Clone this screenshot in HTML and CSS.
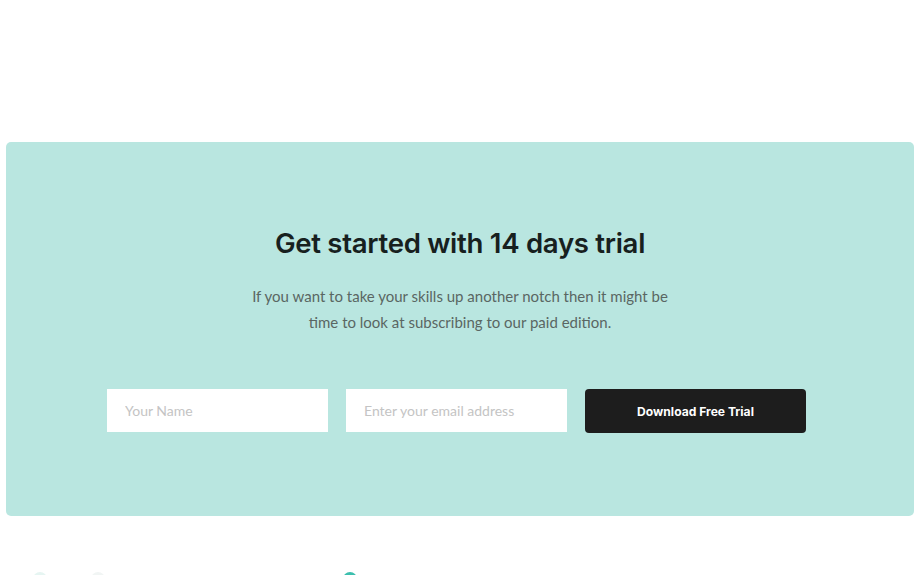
FILE: index.html
```html
<!DOCTYPE html>
<html lang="en">
<head>
<meta charset="utf-8">
<title>Get started</title>
<link rel="stylesheet" href="styles.css">
</head>
<body>
<div class="page">
  <section class="cta">
    <h2 class="cta-title">Get started with 14 days trial</h2>
    <p class="cta-text">If you want to take your skills up another notch then it might be time to look at subscribing to our paid edition.</p>
    <form class="cta-form">
      <input class="field" type="text" placeholder="Your Name">
      <input class="field" type="email" placeholder="Enter your email address">
      <button class="btn" type="button">Download Free Trial</button>
    </form>
  </section>
  <div class="next">
    <span class="dot dot-faint dot-a"></span>
    <span class="dot dot-faint dot-b"></span>
    <span class="dot dot-teal"></span>
  </div>
</div>
</body>
</html>
```
FILE: styles.css
```css
* { box-sizing: border-box; }
html, body { margin: 0; padding: 0; background: #ffffff; }
body {
  width: 920px;
  height: 575px;
  overflow: hidden;
  font-family: "Lato", "Liberation Sans", sans-serif;
}
.page {
  padding: 142px 6px 0 6px;
}
.cta {
  background: #b9e6e0;
  border-radius: 5px;
  height: 374px;
  padding-top: 82px;
  display: flex;
  flex-direction: column;
  align-items: center;
}
.cta-title {
  margin: 0;
  font-family: "Inter", "Liberation Sans", sans-serif;
  font-weight: 600;
  font-size: 27.6px;
  line-height: 38px;
  color: #17201e;
  letter-spacing: -0.3px;
}
.cta-text {
  margin: 21px 0 0 0;
  width: 420px;
  text-align: center;
  font-family: "Lato", "Liberation Sans", sans-serif;
  font-size: 15px;
  line-height: 26px;
  color: #5a6663;
}
.cta-form {
  margin-top: 54px;
  display: flex;
  gap: 18px;
  padding-right: 7px;
}
.field {
  width: 221px;
  height: 43px;
  border: none;
  border-radius: 0;
  background: #ffffff;
  padding: 0 18px;
  font-family: "Lato", "Liberation Sans", sans-serif;
  font-size: 14px;
  color: #333;
  outline: none;
}
.field::placeholder { color: #c4c4c4; }
.btn {
  width: 221px;
  height: 44px;
  border: none;
  border-radius: 4px;
  background: #1d1d1d;
  color: #ffffff;
  font-family: "Inter", "Liberation Sans", sans-serif;
  font-weight: 700;
  font-size: 12.1px;
  cursor: pointer;
}
.next {
  position: relative;
  height: 60px;
}
.dot {
  position: absolute;
  top: 56px;
  width: 14px;
  height: 14px;
  border-radius: 50%;
}
.dot-teal { left: 337px; background: #3cbfae; }
.dot-faint { background: #e6f5f2; }
.dot-a { left: 27px; }
.dot-b { left: 85px; background: #f1f5f4; }
```
